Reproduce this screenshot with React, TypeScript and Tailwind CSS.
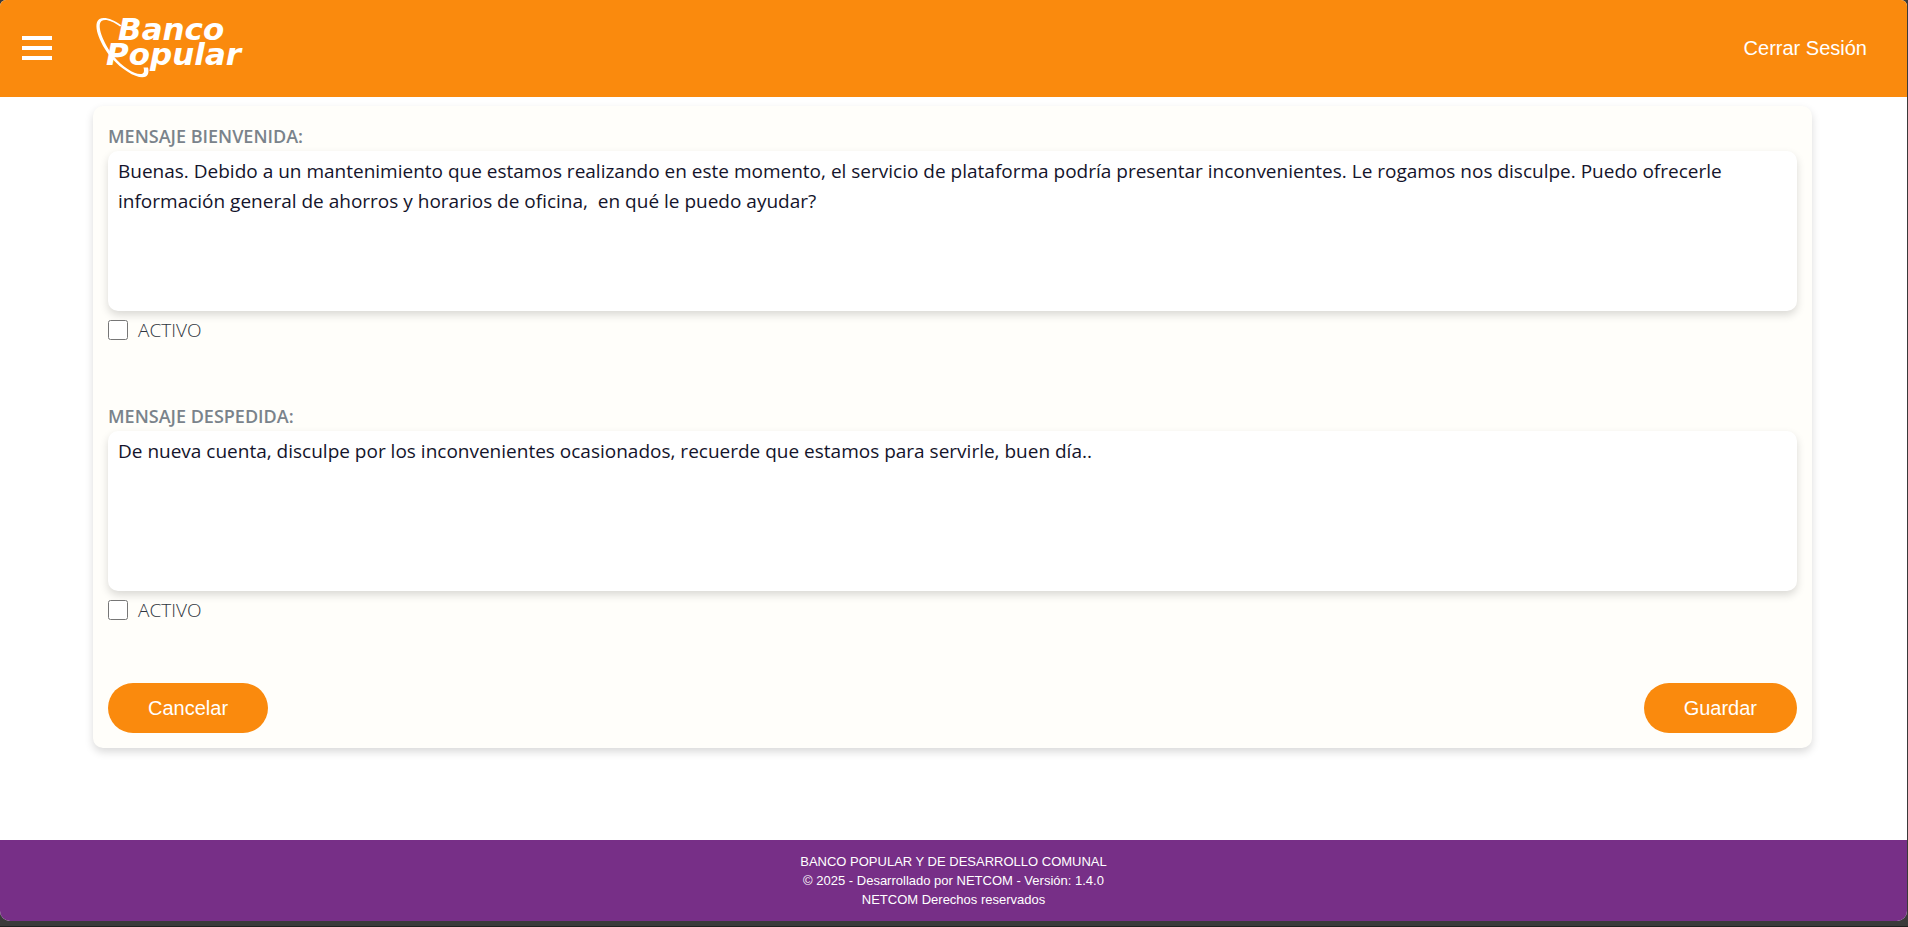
import { useState } from "react";

const SANS = "font-['Segoe_UI','Open_Sans','Noto_Sans',sans-serif]";

function Logo() {
  return (
    <svg width="170" height="75" viewBox="0 0 170 75" role="img" aria-label="Banco Popular" className="overflow-visible">
      <path
        d="M31.5 15.5 C23 9 14 6.5 9.5 9 C2.500 13 8 32 22 48.500 C33 61 49 70 56 66.500 C58.500 65 59 61 58 57.500 L53.500 57.500 C54.500 61 54 63.500 51.500 64 C45 65 33 57.500 23.500 46 C12.500 32 6.500 15 11.500 11 C15 8.500 22 10.500 30 16.500 Z"
        fill="#fff"
      />
      <g fill="#fff" fontSize="31" className="font-['DejaVu_Sans',sans-serif] font-bold italic">
        <text x="28" y="30">
          Banco
        </text>
        <text x="16" y="55">
          Popular
        </text>
      </g>
    </svg>
  );
}

function MessageField({ id, label, initial }: { id: string; label: string; initial: string }) {
  const [text, setText] = useState(initial);
  return (
    <section className="mb-10 flex flex-col">
      <label htmlFor={id} className="text-lg leading-[30px] font-semibold text-[#7a838b]">
        {label}
      </label>
      <textarea
        id={id}
        value={text}
        onChange={(e) => setText(e.target.value)}
        className="h-40 w-full resize-none rounded-[10px] bg-white px-2.5 py-[5px] text-[19px] leading-[30px] text-[#14142b] shadow-[0_4px_8px_rgba(0,0,0,0.15)] outline-none"
      />
      <label className="mt-1 mb-4 flex h-[30px] items-center gap-2.5 text-[19px] font-light text-[#2f3640]">
        <input type="checkbox" className="size-5" />
        ACTIVO
      </label>
    </section>
  );
}

const BUTTON = "h-[50px] rounded-full bg-[#fa8a0d] px-10 font-['Liberation_Sans',Arial,sans-serif] text-xl text-white";

export default function App() {
  return (
    <div className="flex min-h-screen flex-col border-b border-[#202020] bg-[#3a3a3a] pr-px pb-[5px]">
      <div className={`flex flex-1 flex-col overflow-hidden rounded-t-md rounded-b-[10px] bg-white ${SANS}`}>
        <header className="flex h-[97px] items-center bg-[#fa8a0d] pr-10 pb-0.5 pl-[22px]">
          <button type="button" aria-label="Menú" className="mr-[38px] flex w-[30px] flex-col gap-1.5">
            <span className="h-1 w-full bg-white" />
            <span className="h-1 w-full bg-white" />
            <span className="h-1 w-full bg-white" />
          </button>
          <Logo />
          <a href="#" className="ml-auto font-['Liberation_Sans',Arial,sans-serif] text-xl text-white">
            Cerrar Sesión
          </a>
        </header>

        <main className="flex-1 pt-[9px] pr-[95px] pb-[73px] pl-[93px]">
          <form
            onSubmit={(e) => e.preventDefault()}
            className="rounded-[10px] bg-[#fffefa] p-[15px] shadow-[0_4px_8px_rgba(0,0,0,0.15)]"
          >
            <MessageField
              id="bienvenida"
              label="MENSAJE BIENVENIDA:"
              initial="Buenas. Debido a un mantenimiento que estamos realizando en este momento, el servicio de plataforma podría presentar inconvenientes. Le rogamos nos disculpe. Puedo ofrecerle información general de ahorros y horarios de oficina,  en qué le puedo ayudar?"
            />
            <MessageField
              id="despedida"
              label="MENSAJE DESPEDIDA:"
              initial="De nueva cuenta, disculpe por los inconvenientes ocasionados, recuerde que estamos para servirle, buen día.."
            />
            <div className="flex justify-between pt-0.5">
              <button type="button" className={BUTTON}>
                Cancelar
              </button>
              <button type="submit" className={BUTTON}>
                Guardar
              </button>
            </div>
          </form>
        </main>

        <footer className="bg-[#772f87] py-3 text-center font-['Liberation_Sans',Arial,sans-serif] text-[13px] leading-[19px] text-white">
          <p>BANCO POPULAR Y DE DESARROLLO COMUNAL</p>
          <p>© 2025 - Desarrollado por NETCOM - Versión: 1.4.0</p>
          <p>NETCOM Derechos reservados</p>
        </footer>
      </div>
    </div>
  );
}
